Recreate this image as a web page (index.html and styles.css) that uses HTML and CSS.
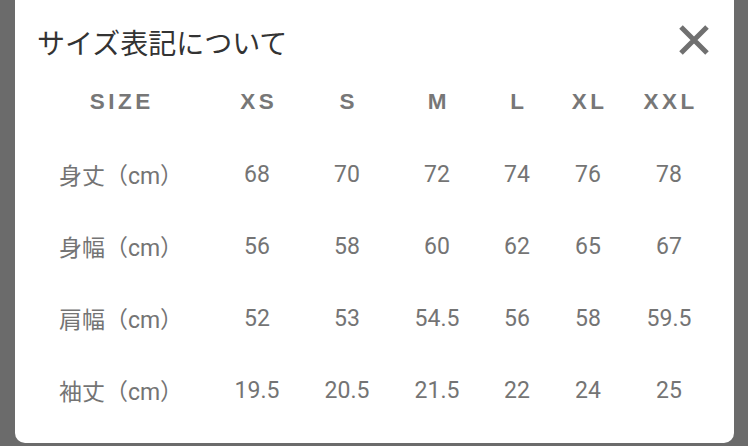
FILE: index.html
```html
<!DOCTYPE html>
<html lang="ja">
<head>
<meta charset="utf-8">
<link rel="stylesheet" href="styles.css">
</head>
<body>
<div class="card">
  <div class="head">
    <div class="title">サイズ表記について</div>
    <svg class="close" width="32" height="32" viewBox="0 0 32 32" aria-label="閉じる">
      <path d="M3 3 L29 29 M29 3 L3 29" stroke="#707070" stroke-width="5" stroke-linecap="butt" fill="none"/>
    </svg>
  </div>
  <div class="table">
    <div class="row hrow">
      <div class="c h">SIZE</div><div class="c h">XS</div><div class="c h">S</div><div class="c h">M</div><div class="c h">L</div><div class="c h">XL</div><div class="c h">XXL</div>
    </div>
    <div class="row">
      <div class="c lab">身丈（cm）</div><div class="c">68</div><div class="c">70</div><div class="c">72</div><div class="c">74</div><div class="c">76</div><div class="c">78</div>
    </div>
    <div class="row">
      <div class="c lab">身幅（cm）</div><div class="c">56</div><div class="c">58</div><div class="c">60</div><div class="c">62</div><div class="c">65</div><div class="c">67</div>
    </div>
    <div class="row">
      <div class="c lab">肩幅（cm）</div><div class="c">52</div><div class="c">53</div><div class="c">54.5</div><div class="c">56</div><div class="c">58</div><div class="c">59.5</div>
    </div>
    <div class="row">
      <div class="c lab">袖丈（cm）</div><div class="c">19.5</div><div class="c">20.5</div><div class="c">21.5</div><div class="c">22</div><div class="c">24</div><div class="c">25</div>
    </div>
  </div>
</div>
</body>
</html>
```
FILE: styles.css
```css
html, body {
  margin: 0;
  padding: 0;
  background: #6b6b6b;
  width: 748px;
  height: 446px;
  overflow: hidden;
}
.card {
  margin: 0 14px 0 15px;
  height: 443px;
  background: #fff;
  border-radius: 0 0 10px 10px;
  box-sizing: border-box;
  padding: 0 24px 0 22px;
}
.head {
  height: 66px;
  padding-top: 18px;
  box-sizing: border-box;
  display: flex;
  align-items: center;
  justify-content: space-between;
}
.title {
  font-family: "Noto Sans CJK JP", "Noto Sans", sans-serif;
  font-size: 28px;
  color: #333;
  line-height: 40px;
}
.close {
  display: block;
  margin-top: -4px;
}
.row {
  display: grid;
  grid-template-columns: 166px 108px 72px 108px 52px 90px 72px;
  height: 72px;
  align-items: center;
}
.c {
  text-align: center;
  font-family: Roboto, "Noto Sans CJK JP", sans-serif;
  font-size: 23px;
  color: #747474;
  white-space: nowrap;
}
.lab {
  font-size: 23px;
  padding-left: 2px;
}
.h {
  font-family: "Liberation Sans", Arial, sans-serif;
  font-weight: 700;
  font-size: 22.5px;
  letter-spacing: 3.5px;
  padding-left: 3.5px;
  color: #777;
}
```
